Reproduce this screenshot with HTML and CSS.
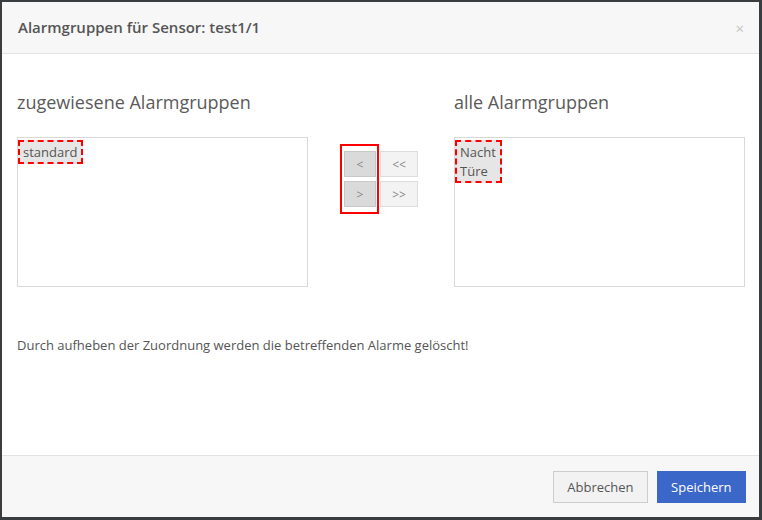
FILE: index.html
```html
<!DOCTYPE html>
<html lang="de">
<head>
    <meta charset="UTF-8">
    <meta name="viewport" content="width=device-width, initial-scale=1.0">
    <title>Alarmgruppen</title>
    <link rel="stylesheet" href="styles.css">
</head>
<body>
    <div class="modal">
        <div class="modal-header">
            <h4>Alarmgruppen für Sensor: test1/1</h4>
            <span class="close">&times;</span>
        </div>
        <div class="modal-body">
            <div class="picker">
                <div class="pick-col">
                    <h3>zugewiesene Alarmgruppen</h3>
                    <div class="listbox">
                        <div class="marked">
                            <div class="opt">standard</div>
                        </div>
                    </div>
                </div>
                <div class="mover">
                    <div class="mover-col mover-hit">
                        <button class="mv mv-dark">&lt;</button>
                        <button class="mv mv-dark">&gt;</button>
                    </div>
                    <div class="mover-col mover-all">
                        <button class="mv">&lt;&lt;</button>
                        <button class="mv">&gt;&gt;</button>
                    </div>
                </div>
                <div class="pick-col">
                    <h3>alle Alarmgruppen</h3>
                    <div class="listbox">
                        <div class="marked">
                            <div class="opt">Nacht</div>
                            <div class="opt">Türe</div>
                        </div>
                    </div>
                </div>
            </div>
            <p class="note">Durch aufheben der Zuordnung werden die betreffenden Alarme gelöscht!</p>
        </div>
        <div class="modal-footer">
            <button class="btn btn-default">Abbrechen</button>
            <button class="btn btn-primary">Speichern</button>
        </div>
    </div>
</body>
</html>
```

FILE: styles.css
```css
html, body {
    margin: 0;
    padding: 0;
}
body {
    font-family: "Open Sans", Arial, sans-serif;
    background-color: #3a3d40;
    height: 520px;
    overflow: hidden;
    color: #555555;
}
.modal {
    margin: 2px 3px 0 2px;
    height: 515px;
    background-color: #ffffff;
    display: flex;
    flex-direction: column;
}
.modal-header {
    display: flex;
    align-items: center;
    justify-content: space-between;
    padding: 15px 16px 15px 16px;
    background-color: #f7f7f7;
    border-bottom: 1px solid #e3e3e3;
}
.modal-header h4 {
    margin: 0;
    font-size: 15px;
    line-height: 21px;
    font-weight: 600;
    color: #555555;
}
.close {
    font-size: 15px;
    line-height: 15px;
    color: #c4c4c4;
    margin-right: -1px;
    margin-top: 2px;
}
.modal-body {
    flex: 1;
    padding: 37px 14px 0 15px;
}
.picker {
    display: grid;
    grid-template-columns: 291px 1fr 291px;
}
.pick-col h3 {
    margin: 0 0 24px;
    font-size: 18px;
    line-height: 22px;
    font-weight: 400;
    color: #5a5a5a;
}
.listbox {
    border: 1px solid #d9d9d9;
    padding: 2px 0 0;
    box-sizing: border-box;
    height: 150px;
}
.marked {
    display: inline-block;
    vertical-align: top;
    background-color: #e6e6e6;
    border: 2px dashed #ff0000;
    padding: 1px 4px 0 3px;
}
.opt {
    font-size: 13px;
    line-height: 19px;
    color: #555555;
}
.mover {
    display: flex;
    justify-content: center;
    align-items: flex-start;
    padding: 53px 4px 0 0;
}
.mover-col {
    display: flex;
    flex-direction: column;
    gap: 4px;
}
.mover-hit {
    border: 2px solid #ff0000;
    padding: 5px 1px 5px 2px;
}
.mover-all {
    margin-top: 7px;
    margin-left: 1px;
}
.mv {
    height: 26px;
    width: 38px;
    padding: 0;
    font-family: "Open Sans", Arial, sans-serif;
    font-size: 12px;
    color: #888888;
    background-color: #f3f3f3;
    border: 1px solid #dddddd;
    border-radius: 0;
}
.mv-dark {
    width: 32px;
    background-color: #dadada;
    border-color: #c8c8c8;
}
.note {
    margin: 49px 0 0;
    font-size: 13px;
    line-height: 18px;
    color: #555555;
}
.modal-footer {
    display: flex;
    justify-content: flex-end;
    gap: 9px;
    padding: 15px 13px 14px;
    background-color: #f7f7f7;
    border-top: 1px solid #e3e3e3;
}
.btn {
    height: 32px;
    padding: 0 13.5px;
    font-family: "Open Sans", Arial, sans-serif;
    font-size: 13px;
    border-radius: 0;
    cursor: pointer;
}
.btn-default {
    background-color: #f2f2f2;
    border: 1px solid #cccccc;
    color: #555555;
    padding: 0 13px;
}
.btn-primary {
    background-color: #3a67c8;
    border: 1px solid #3a67c8;
    color: #ffffff;
}
```
